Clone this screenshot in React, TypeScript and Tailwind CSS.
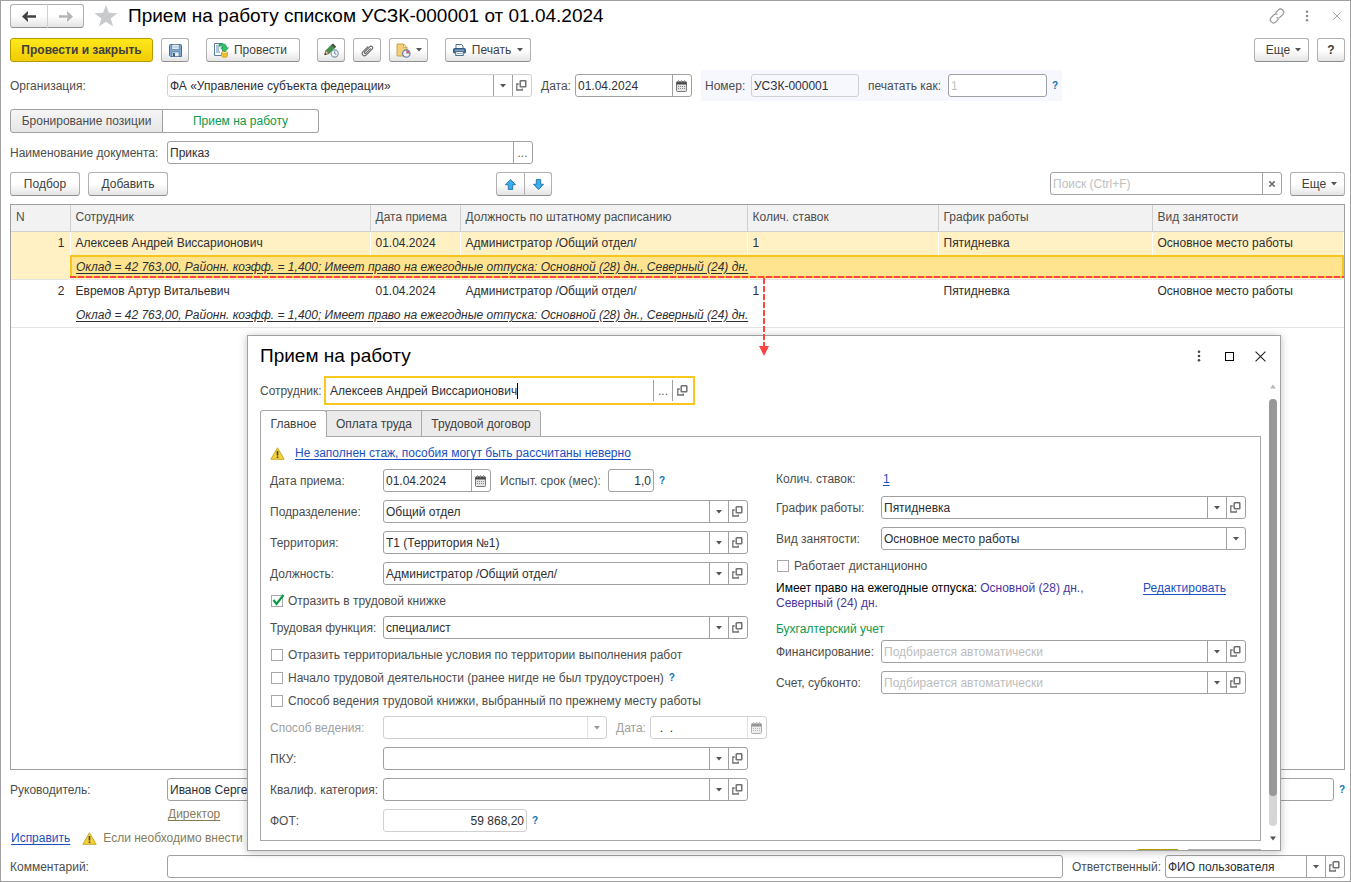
import type {ReactNode} from "react";
import clsx from "clsx";

const HINT = "text-[10px] leading-3 font-bold text-[#0f74b8]";

const columns = [
  {title: "N", width: "w-[59px]"},
  {title: "Сотрудник", width: "w-[300px]"},
  {title: "Дата приема", width: "w-[90px]"},
  {title: "Должность по штатному расписанию", width: "w-[287px]"},
  {title: "Колич. ставок", width: "w-[191px]"},
  {title: "График работы", width: "w-[214px]"},
  {title: "Вид занятости", width: "w-auto"},
];

const employees = [
  {
    name: "Алексеев Андрей Виссарионович",
    cells: ["01.04.2024", "Администратор /Общий отдел/", "1", "Пятидневка", "Основное место работы"],
    selected: true,
  },
  {
    name: "Евремов Артур Витальевич",
    cells: ["01.04.2024", "Администратор /Общий отдел/", "1", "Пятидневка", "Основное место работы"],
    selected: false,
  },
];

const terms =
  "Оклад = 42 763,00, Районн. коэфф. = 1,400; Имеет право на ежегодные отпуска: Основной (28) дн., Северный (24) дн.";

/* Icons */

function Caret() {
  return (
    <svg width="6" height="4" viewBox="0 0 6 4" aria-hidden="true">
      <path d="M0 0h6L3 3.6z" fill="#555" />
    </svg>
  );
}

function OpenIcon() {
  return (
    <svg width="11" height="11" viewBox="0 0 11 11" fill="none" stroke="#707070" aria-hidden="true">
      <rect x="4.2" y="0.8" width="5.6" height="6" rx="0.5" strokeWidth="1.5" />
      <path d="M2.800 4H0.800v6h5.500V8.500" strokeWidth="1.300" />
    </svg>
  );
}

function CalendarIcon() {
  return (
    <svg width="11" height="12" viewBox="0 0 11 12" aria-hidden="true">
      <rect x="0.5" y="2" width="10" height="9.500" rx="1" fill="#e4e4e4" stroke="#777" />
      <path d="M0.500 1.500h10v3h-10z" fill="#4a4a4a" />
      <path d="M2.500 0v2.500M5.500 0v2.500M8.500 0v2.500" stroke="#999" />
      <path d="M2 6.500h7M2 8.500h7" stroke="#888" strokeDasharray="1 1" />
    </svg>
  );
}

function Arrow({left, color}: {left?: boolean; color: string}) {
  return (
    <svg width="14" height="11" viewBox="0 0 14 11" className={clsx(!left && "rotate-180")} aria-hidden="true">
      <path d="M6 0v4.300h8v2.400H6V11L0 5.500z" fill={color} />
      <path d="M7 0v3.900L5.200 4.500z M7 11V7.100L5.200 6.500z" fill="#fff" />
    </svg>
  );
}

function StarIcon() {
  return (
    <svg width="24" height="22" viewBox="0 0 24 22" aria-hidden="true">
      <path d="M12 0l2.9 7.8 8.6.4-6.8 5.2 2.4 8.2-7.1-4.8-7.1 4.8 2.4-8.2L.5 8.2l8.6-.4z" fill="#c9cacc" />
    </svg>
  );
}

function SaveIcon() {
  return (
    <svg width="13" height="13" viewBox="0 0 13 13" aria-hidden="true">
      <path d="M0.5 1.5a1 1 0 0 1 1-1h10a1 1 0 0 1 1 1v11h-11l-1-1z" fill="#7fa6cc" stroke="#41719e" />
      <rect x="3" y="0.5" width="7" height="5" fill="#fff" stroke="#41719e" strokeWidth="0.6" />
      <path d="M4 2.2h5M4 3.8h5" stroke="#8aa9c6" strokeWidth="0.7" />
      <rect x="3" y="8" width="7" height="4.5" fill="#e9eff5" stroke="#41719e" strokeWidth="0.6" />
      <rect x="4" y="9" width="2" height="3.5" fill="#35618c" />
    </svg>
  );
}

function PostIcon() {
  return (
    <svg width="15" height="15" viewBox="0 0 15 15" aria-hidden="true">
      <path d="M0.5 0.5h8v12h-8z" fill="#fff" stroke="#5c7c9c" />
      <path d="M2 3h4M2 5h3M2 7h3M2 9h4" stroke="#5c87b0" />
      <path d="M7.5 9.5v3.3c0 2 6 2 6 0V9.5z" fill="#f1c232" stroke="#c79a18" strokeWidth="0.8" />
      <ellipse cx="10.5" cy="9.5" rx="3" ry="1.2" fill="#fbe08a" stroke="#c79a18" strokeWidth="0.6" />
      <path
        d="M5 0.8h3.500c2.800 0 4 1.200 4 4h2L10.500 9 6.500 4.800h2.300c0-1.300-.7-1.700-2-1.700H5z"
        fill="#2fc26b"
        stroke="#168a43"
        strokeWidth="0.6"
      />
    </svg>
  );
}

function PencilClockIcon() {
  return (
    <svg width="15" height="15" viewBox="0 0 15 15" aria-hidden="true">
      <path d="M0.8 11.5L2 7.5 8.5 1l3 3L5 10.5z" fill="#3f9148" stroke="#2c6d34" strokeWidth="0.7" />
      <path d="M7.5 2l1.6-1.5 2.9 3L10.500 5z" fill="#4c4c4c" />
      <path d="M0.8 11.5L2 7.5l3 3z" fill="#efc99a" stroke="#5d4a33" strokeWidth="0.5" />
      <path d="M0.6 12l.5-2 1.4 1.4z" fill="#222" />
      <circle cx="10.7" cy="10.5" r="3.6" fill="#eef3f8" stroke="#8298ae" strokeWidth="1.1" />
      <path d="M10.7 8.3v2.3l1.6 1" stroke="#54708c" strokeWidth="0.9" fill="none" />
    </svg>
  );
}

function ClipIcon() {
  return (
    <svg width="13" height="13" viewBox="0 0 13 13" fill="none" stroke="#666" strokeWidth="1.1" aria-hidden="true">
      <path d="M9.8 4.3L5 9.2c-.9.9-2.2-.3-1.3-1.3l5-5.1c1.7-1.7 4.1.6 2.4 2.4l-5.7 5.7c-2.500 2.400-5.800-.8-3.400-3.300L7.200 2.300" />
    </svg>
  );
}

function DocClockIcon() {
  return (
    <svg width="15" height="15" viewBox="0 0 15 15" aria-hidden="true">
      <path d="M1 1h6.5L11 4.5V13H1z" fill="#f3cf78" stroke="#c39a3c" strokeWidth="0.9" />
      <path d="M7.5 1v3.500H11z" fill="#fff3cf" stroke="#c39a3c" strokeWidth="0.7" />
      <circle cx="10.3" cy="10.5" r="3.7" fill="#eef3fa" stroke="#5f7fae" strokeWidth="1.2" />
      <path d="M10.3 10.5V7.2a3.3 3.3 0 0 1 3.3 3.3z" fill="#c5607a" />
    </svg>
  );
}

function PrinterIcon() {
  return (
    <svg width="13" height="12" viewBox="0 0 13 12" aria-hidden="true">
      <path d="M3 0.5h5.500L10 2v3H3z" fill="#fff" stroke="#4b6f93" />
      <rect x="0.5" y="4.5" width="12" height="4.5" rx="1" fill="#3f6a94" stroke="#31587f" />
      <path d="M2 6.2h9" stroke="#b7cadb" strokeWidth="0.8" />
      <rect x="2.8" y="7.5" width="7.4" height="4" fill="#fff" stroke="#4b6f93" />
      <path d="M4 9.5h5" stroke="#8faac4" />
    </svg>
  );
}

function MoveIcon({down}: {down?: boolean}) {
  return (
    <svg width="11" height="11" viewBox="0 0 10 10" className={clsx(down && "rotate-180")} aria-hidden="true">
      <path d="M5 0.5L9.600 5.200H7v4.300H3V5.200H0.400z" fill="#39aee8" stroke="#1c6fae" strokeWidth="0.8" strokeLinejoin="round" />
    </svg>
  );
}

function WarningIcon() {
  return (
    <svg width="15" height="13" viewBox="0 0 15 13" className="shrink-0" aria-hidden="true">
      <path d="M7.5 0.8L14.2 12.3H0.8z" fill="#f0d23c" stroke="#c9a92a" strokeLinejoin="round" />
      <path d="M7.5 4v4.5M7.5 9.5v1.5" stroke="#4a4320" strokeWidth="1.6" />
    </svg>
  );
}

function LinkIcon() {
  return (
    <svg width="16" height="16" viewBox="0 0 16 16" fill="none" stroke="#8f8f8f" strokeWidth="1.1" aria-hidden="true">
      <path d="M6.500 4.800l2.900-2.900c2.700-2.600 7.200 1.500 4.500 4.400l-3 3c-1 .9-2.300 1-3.400.3" />
      <path d="M9.500 11.200l-2.900 2.900c-2.700 2.600-7.200-1.500-4.500-4.400l3-3c1-.9 2.300-1 3.400-.3" />
    </svg>
  );
}

function DotsIcon({color}: {color: string}) {
  return (
    <svg width="4" height="12" viewBox="0 0 4 12" fill={color} aria-hidden="true">
      <circle cx="2" cy="1.7" r="1.3" />
      <circle cx="2" cy="6" r="1.3" />
      <circle cx="2" cy="10.3" r="1.3" />
    </svg>
  );
}

function CrossIcon({size, color, width = 1}: {size: number; color: string; width?: number}) {
  return (
    <svg width={size} height={size} viewBox="0 0 10 10" stroke={color} strokeWidth={width} aria-hidden="true">
      <path d="M0.5 0.5l9 9M9.5 0.5l-9 9" />
    </svg>
  );
}

/* Controls */

function Button({className, label, children}: {className?: string; label?: string; children: ReactNode}) {
  return (
    <button
      type="button"
      aria-label={label}
      className={clsx(
        "flex h-6 shrink-0 items-center justify-center rounded-[3px] border border-[#b0b0b0] border-b-[#8f8f8f] bg-linear-to-b from-white from-50% to-[#e4e4e4] text-[#404040]",
        className
      )}>
      {children}
    </button>
  );
}

type FieldProps = {
  id: string;
  value?: string;
  placeholder?: string;
  className?: string;
  select?: boolean;
  open?: boolean;
  calendar?: boolean;
  more?: boolean;
  light?: boolean;
  disabled?: boolean;
  right?: boolean;
};

function Field({id, value, placeholder, className, select, open, calendar, more, light, disabled, right}: FieldProps) {
  const divider = disabled ? "border-[#d0d0d0]" : "border-[#a0a0a0]";
  const side = clsx(
    "flex h-full w-[19px] shrink-0 items-center justify-center border-l pr-px",
    divider,
    disabled && "opacity-60"
  );

  return (
    <div
      className={clsx(
        "flex h-[23px] min-w-0 rounded-[3px] border",
        light || disabled ? "border-[#d0d0d0]" : "border-[#a0a0a0]",
        className
      )}>
      {select ? (
        <div className="relative h-full min-w-0 flex-1">
          <select
            id={id}
            disabled={disabled}
            className={clsx(
              "block h-full w-full appearance-none pr-5 pl-[2px] outline-none",
              placeholder ? "text-[#bdbdbd]" : "text-[#2e2e33]"
            )}>
            <option>{value ?? placeholder}</option>
          </select>
          <span className={clsx(side, "pointer-events-none absolute top-0 right-0")}>
            <Caret />
          </span>
        </div>
      ) : (
        <input
          id={id}
          type="text"
          defaultValue={value}
          placeholder={placeholder}
          disabled={disabled}
          className={clsx(
            "min-w-0 flex-1 px-[2px] text-[#2e2e33] outline-none placeholder:text-[#c0c0c0]",
            right && "text-right"
          )}
        />
      )}
      {more && (
        <button type="button" aria-label="Выбрать" className={clsx(side, "text-[#666]")}>
          ...
        </button>
      )}
      {calendar && (
        <button type="button" aria-label="Календарь" disabled={disabled} className={side}>
          <CalendarIcon />
        </button>
      )}
      {open && (
        <button type="button" aria-label="Открыть" className={side}>
          <OpenIcon />
        </button>
      )}
    </div>
  );
}

type RowProps = {
  label: string;
  id: string;
  wide?: boolean;
  muted?: boolean;
  children: ReactNode;
};

function Row({label, id, wide, muted, children}: RowProps) {
  return (
    <div className="flex items-center">
      <label
        htmlFor={id}
        className={clsx("shrink-0 whitespace-nowrap", wide ? "w-[113px]" : "w-[105px]", muted && "text-[#a0a0a0]")}>
        {label}
      </label>
      {children}
    </div>
  );
}

function Check({id, label, checked, children}: {id: string; label: string; checked?: boolean; children?: ReactNode}) {
  return (
    <div className="flex h-[15px] items-center pl-px">
      <span className="relative flex">
        <input
          id={id}
          type="checkbox"
          defaultChecked={checked}
          className="peer size-3 appearance-none border border-[#a8a8a8] bg-white"
        />
        <svg
          width="14"
          height="13"
          viewBox="0 0 14 13"
          className="pointer-events-none absolute bottom-0 left-0 hidden peer-checked:block"
          aria-hidden="true">
          <path d="M2.500 6l3 4L12.500 1" fill="none" stroke="#0b9a4b" strokeWidth="2.200" />
        </svg>
      </span>
      <label htmlFor={id} className="pl-[5px] whitespace-nowrap">
        {label}
      </label>
      {children}
    </div>
  );
}

function EmployeeTable() {
  return (
    <div className="relative mt-2 flex-1 border border-[#a0a0a0]">
      <table className="w-full table-fixed border-collapse">
        <thead>
          <tr className="h-[26px] bg-[#f2f2f2] text-left text-[#4d4d4d]">
            {columns.map((col) => (
              <th
                key={col.title}
                className={clsx(
                  "border-r border-b border-[#d0d0d0] px-[5px] pb-[2px] font-normal whitespace-nowrap last:border-r-0",
                  col.width
                )}>
                {col.title}
              </th>
            ))}
          </tr>
        </thead>
        {employees.map((employee, i) => (
          <tbody
            key={employee.name}
            className={clsx("border-b border-[#e4e4e4] text-[#2e2e33]", employee.selected && "bg-[#fff1c4]")}>
            <tr className="h-6">
              <td rowSpan={2} className="px-[5px] pt-1 text-right align-top leading-[14px]">
                {i + 1}
              </td>
              <td className="border-x border-white px-[5px] whitespace-nowrap">{employee.name}</td>
              {employee.cells.map((cell, n) => (
                <td key={n} className="border-x border-white px-[5px] whitespace-nowrap">
                  {cell}
                </td>
              ))}
            </tr>
            <tr className="h-6">
              <td colSpan={6} className="p-0">
                <div
                  className={clsx(
                    "flex h-[23px] items-center border-2 px-1 whitespace-nowrap italic underline underline-offset-2",
                    employee.selected ? "border-[#f9c41c] bg-[#ffe48f]" : "border-transparent"
                  )}>
                  {terms}
                </div>
              </td>
            </tr>
          </tbody>
        ))}
      </table>

      {/* Callout from the selected row to the dialog */}
      <svg className="absolute top-[71px] left-[59px] z-20 h-[3px] w-[calc(100%-59px)]" aria-hidden="true">
        <line x1="0" y1="1" x2="100%" y2="1" stroke="#f44" strokeWidth="2" strokeDasharray="6 2" />
      </svg>
      <svg width="10" height="78" className="absolute top-[73px] left-[748px] z-20" aria-hidden="true">
        <path d="M5 0v70" stroke="#f44" strokeWidth="2" strokeDasharray="6 2" />
        <path d="M0 68h10L5 78z" fill="#f44" />
      </svg>
    </div>
  );
}

function HireDialog() {
  return (
    <section
      aria-label="Прием на работу"
      className="absolute top-[334px] right-[69px] left-[246px] z-10 border border-[#a0a0a0] bg-white shadow-[0_1px_8px_rgba(0,0,0,0.25)]">
      <div className="flex h-10 items-center pr-[14px] pl-3">
        <h2 className="flex-1 text-[19px] text-black">Прием на работу</h2>
        <button type="button" aria-label="Меню" className="flex w-[31px] justify-center">
          <DotsIcon color="#444" />
        </button>
        <button type="button" aria-label="Развернуть" className="flex w-[31px] justify-center">
          <span className="size-[9px] border border-black" />
        </button>
        <button type="button" aria-label="Закрыть" className="ml-[10px] flex w-[11px] justify-center">
          <CrossIcon size={11} color="#222" />
        </button>
      </div>

      <div className="flex">
        <div className="min-w-0 flex-1 pl-3">
          <div className="flex items-center">
            <label htmlFor="employee" className="w-16 whitespace-nowrap">
              Сотрудник:
            </label>
            <div className="flex h-[29px] w-[371px] items-center border-2 border-[#f9c81e] py-[2px] pl-1">
              <input
                id="employee"
                type="text"
                defaultValue="Алексеев Андрей Виссарионович"
                className="field-sizing-content text-[#2e2e33] outline-none"
              />
              <span className="h-4 w-px bg-black" />
              <button
                type="button"
                aria-label="Выбрать"
                className="ml-auto flex h-full w-[19px] items-center justify-center border-l border-[#a0a0a0] text-[#666]">
                ...
              </button>
              <button
                type="button"
                aria-label="Открыть"
                className="flex h-full w-[21px] items-center justify-center border-l border-[#a0a0a0] pr-[2px]">
                <OpenIcon />
              </button>
            </div>
          </div>

          <div role="tablist" className="mt-[5px] -mb-px flex h-[27px] text-[#404040]">
            <button
              type="button"
              role="tab"
              aria-selected="true"
              className="relative w-[67px] rounded-t-[3px] border border-b-0 border-[#a8a8a8] bg-white">
              Главное
            </button>
            <button type="button" role="tab" aria-selected="false" className="-ml-px w-24 border border-[#a8a8a8] bg-[#ebebeb]">
              Оплата труда
            </button>
            <button
              type="button"
              role="tab"
              aria-selected="false"
              className="-ml-px w-[120px] rounded-tr-[3px] border border-[#a8a8a8] bg-[#ebebeb]">
              Трудовой договор
            </button>
          </div>

          <div className="border border-[#a8a8a8] px-[9px] py-2">
            <div className="flex h-4 items-center gap-[10px]">
              <WarningIcon />
              <a href="#" className="text-[#1a4fc0] underline underline-offset-2">
                Не заполнен стаж, пособия могут быть рассчитаны неверно
              </a>
            </div>

            <div className="mt-2 flex">
              <div className="flex w-[506px] shrink-0 flex-col gap-2">
                <Row label="Дата приема:" id="hireDate" wide>
                  <Field id="hireDate" value="01.04.2024" calendar className="w-[108px]" />
                  <label htmlFor="trial" className="w-[108px] pl-[9px] whitespace-nowrap">
                    Испыт. срок (мес):
                  </label>
                  <Field id="trial" value="1,0" right className="ml-[9px] w-[46px]" />
                  <span className={clsx(HINT, "ml-[5px]")}>?</span>
                </Row>
                <Row label="Подразделение:" id="department" wide>
                  <Field id="department" value="Общий отдел" select open className="w-[365px]" />
                </Row>
                <Row label="Территория:" id="territory" wide>
                  <Field id="territory" value="Т1 (Территория №1)" select open className="w-[365px]" />
                </Row>
                <Row label="Должность:" id="position" wide>
                  <Field id="position" value="Администратор /Общий отдел/" select open className="w-[365px]" />
                </Row>
                <Check id="workbook" label="Отразить в трудовой книжке" checked />
                <Row label="Трудовая функция:" id="duty" wide>
                  <Field id="duty" value="специалист" select open className="w-[365px]" />
                </Row>
                <Check id="conditions" label="Отразить территориальные условия по территории выполнения работ" />
                <Check id="firstJob" label="Начало трудовой деятельности (ранее нигде не был трудоустроен)">
                  <span className={clsx(HINT, "ml-[5px]")}>?</span>
                </Check>
                <Check id="method" label="Способ ведения трудовой книжки, выбранный по прежнему месту работы" />
                <Row label="Способ ведения:" id="keeping" wide muted>
                  <Field id="keeping" select disabled className="w-[224px]" />
                  <label htmlFor="keepingDate" className="w-[43px] pl-[9px] text-[#a0a0a0]">
                    Дата:
                  </label>
                  <Field id="keepingDate" value="  .  ." calendar disabled className="w-[117px]" />
                </Row>
                <Row label="ПКУ:" id="pku" wide>
                  <Field id="pku" select open className="w-[365px]" />
                </Row>
                <Row label="Квалиф. категория:" id="category" wide>
                  <Field id="category" select open className="w-[365px]" />
                </Row>
                <Row label="ФОТ:" id="fund" wide>
                  <Field id="fund" value="59 868,20" right light className="w-[144px]" />
                  <span className={clsx(HINT, "ml-[5px]")}>?</span>
                </Row>
              </div>

              <div className="flex w-[470px] flex-col gap-2">
                <div className="flex h-[19px] items-center">
                  <span className="w-[107px]">Колич. ставок:</span>
                  <a href="#" className="text-[#1a4fc0] underline underline-offset-2">
                    1
                  </a>
                </div>
                <Row label="График работы:" id="schedule">
                  <Field id="schedule" value="Пятидневка" select open className="flex-1" />
                </Row>
                <Row label="Вид занятости:" id="kind">
                  <Field id="kind" value="Основное место работы" select className="flex-1" />
                </Row>
                <Check id="remote" label="Работает дистанционно" />
                <div className="flex justify-between pr-5 leading-[15px]">
                  <div className="text-[#4a35a0]">
                    <div className="flex gap-[3px] whitespace-nowrap">
                      <span className="text-black">Имеет право на ежегодные отпуска:</span>
                      <span>Основной (28) дн.,</span>
                    </div>
                    <div>Северный (24) дн.</div>
                  </div>
                  <a href="#" className="text-[#1a4fc0] underline underline-offset-2">
                    Редактировать
                  </a>
                </div>
                <div>
                  <h3 className="h-[21px] leading-[21px] text-[#0b9a4b]">Бухгалтерский учет</h3>
                  <Row label="Финансирование:" id="financing">
                    <Field id="financing" placeholder="Подбирается автоматически" select open className="flex-1" />
                  </Row>
                </div>
                <Row label="Счет, субконто:" id="account">
                  <Field id="account" placeholder="Подбирается автоматически" select open className="flex-1" />
                </Row>
              </div>
            </div>
          </div>

          {/* Top edge of the buttons below the fold */}
          <div className="mt-2 flex h-px justify-end gap-[10px]">
            <div className="w-10 bg-[#b59a00]" />
            <div className="w-[73px] bg-[#b0b0b0]" />
          </div>
        </div>

        {/* Scrollbar */}
        <div className="flex w-[19px] flex-col items-center pt-2 pb-[9px] pl-[5px]">
          <svg width="6" height="5" viewBox="0 0 6 5" aria-hidden="true">
            <path d="M3 0.5L6 4.5H0z" fill="#b8b8b8" />
          </svg>
          <div className="my-[10px] w-2 flex-1 rounded-full bg-[#d6d6d6]">
            <div className="h-[93%] rounded-full bg-[#989898]" />
          </div>
          <svg width="6" height="5" viewBox="0 0 6 5" aria-hidden="true">
            <path d="M0 0.5h6L3 4.5z" fill="#555" />
          </svg>
        </div>
      </div>
    </section>
  );
}

export default function App() {
  return (
    <main className="relative flex min-h-screen flex-col border border-[#a0a0a0] bg-white pt-[3px] pr-[5px] pb-[3px] pl-[9px] font-['Liberation_Sans',Arial,sans-serif] text-[12px] leading-4 text-[#4d4d4d]">
      <header className="flex h-6 items-center">
        <div className="flex">
          <Button label="Назад" className="w-[38px] rounded-r-none border-r-[#d0d0d0]">
            <Arrow left color="#404040" />
          </Button>
          <Button label="Вперед" className="w-9 rounded-l-none border-l-0">
            <Arrow color="#b4b4b4" />
          </Button>
        </div>
        <button type="button" aria-label="Избранное" className="ml-[10px] flex">
          <StarIcon />
        </button>
        <h1 className="ml-[10px] flex-1 text-[19px] whitespace-nowrap text-black">
          Прием на работу списком УСЗК-000001 от 01.04.2024
        </h1>
        <button type="button" aria-label="Ссылка" className="flex w-[30px] justify-center">
          <LinkIcon />
        </button>
        <button type="button" aria-label="Меню" className="flex w-[30px] justify-center">
          <DotsIcon color="#8f8f8f" />
        </button>
        <button type="button" aria-label="Закрыть" className="mr-1 ml-[11px] flex w-2 justify-center">
          <CrossIcon size={8} color="#8f8f8f" />
        </button>
      </header>

      <div className="mt-[10px] flex gap-2">
        <button
          type="button"
          className="h-6 w-[143px] rounded-[3px] border border-[#b59a00] bg-linear-to-b from-[#ffe81a] to-[#f0cc00] font-bold whitespace-nowrap text-[#404040]">
          Провести и закрыть
        </button>
        <Button label="Записать" className="w-7">
          <SaveIcon />
        </Button>
        <Button className="ml-[9px] w-[94px] gap-[5px] pr-[5px]">
          <PostIcon />
          Провести
        </Button>
        <Button label="Изменить" className="ml-[9px] w-7">
          <PencilClockIcon />
        </Button>
        <Button label="Файлы" className="w-7">
          <ClipIcon />
        </Button>
        <Button label="Создать на основании" className="w-[39px] gap-[5px]">
          <DocClockIcon />
          <Caret />
        </Button>
        <Button className="ml-[9px] w-[86px] gap-[6px]">
          <PrinterIcon />
          Печать
          <Caret />
        </Button>
        <Button className="ml-auto w-[55px] gap-[5px] pl-1">
          Еще
          <Caret />
        </Button>
        <Button className="w-7 font-bold">?</Button>
      </div>

      <div className="mt-3 flex h-[23px] items-center">
        <label htmlFor="org" className="w-[157px]">
          Организация:
        </label>
        <Field id="org" value="ФА «Управление субъекта федерации»" select open light className="w-[365px]" />
        <label htmlFor="date" className="w-[43px] pl-[9px]">
          Дата:
        </label>
        <Field id="date" value="01.04.2024" calendar className="w-[117px]" />
        <div className="ml-[9px] flex h-[31px] items-center bg-[#f7f7fe] px-1">
          <label htmlFor="number" className="w-[46px]">
            Номер:
          </label>
          <Field id="number" value="УСЗК-000001" light className="w-[108px]" />
          <label htmlFor="printAs" className="w-[89px] pl-[9px] whitespace-nowrap">
            печатать как:
          </label>
          <Field id="printAs" placeholder="1" className="w-[99px] bg-white" />
          <span className={clsx(HINT, "ml-[5px]")}>?</span>
        </div>
      </div>

      <div className="mt-3 flex">
        <button
          type="button"
          className="h-6 w-[153px] rounded-l-[3px] border border-[#a0a0a0] bg-linear-to-b from-[#f5f5f5] to-[#e6e6e6] whitespace-nowrap">
          Бронирование позиции
        </button>
        <button type="button" className="h-6 w-[156px] rounded-r-[3px] border border-l-0 border-[#a0a0a0] text-[#0b9a4b]">
          Прием на работу
        </button>
      </div>

      <div className="mt-2 flex items-center">
        <label htmlFor="docName" className="w-[157px] whitespace-nowrap">
          Наименование документа:
        </label>
        <Field id="docName" value="Приказ" more className="w-[366px]" />
      </div>

      <div className="mt-2 flex gap-2">
        <Button className="w-[70px]">Подбор</Button>
        <Button className="w-20">Добавить</Button>
        <div className="ml-[320px] flex">
          <Button label="Вверх" className="w-[29px] rounded-r-none">
            <MoveIcon />
          </Button>
          <Button label="Вниз" className="w-[27px] rounded-l-none border-l-0">
            <MoveIcon down />
          </Button>
        </div>
        <div className="ml-auto flex h-[23px] w-[232px] rounded-[3px] border border-[#a0a0a0]">
          <input
            type="text"
            aria-label="Поиск"
            placeholder="Поиск (Ctrl+F)"
            className="min-w-0 flex-1 px-[2px] outline-none placeholder:text-[#c0c0c0]"
          />
          <button
            type="button"
            aria-label="Очистить"
            className="flex w-[19px] items-center justify-center border-l border-[#a0a0a0] pr-px">
            <CrossIcon size={6} color="#777" width={3} />
          </button>
        </div>
        <Button className="w-[55px] gap-[5px] pl-1">
          Еще
          <Caret />
        </Button>
      </div>

      <EmployeeTable />

      <div className="mt-2 flex items-center">
        <label htmlFor="head" className="w-[157px]">
          Руководитель:
        </label>
        <Field id="head" value="Иванов Сергей" className="flex-1" />
        <span className={clsx(HINT, "ml-[5px]")}>?</span>
      </div>
      <div className="mt-[5px] flex pl-[158px]">
        <a href="#" className="text-[#857c5c] underline underline-offset-2">
          Директор
        </a>
      </div>
      <div className="mt-2 flex h-4 items-center pl-px">
        <a href="#" className="text-[#1a4fc0] underline underline-offset-2">
          Исправить
        </a>
        <div className="ml-3 flex items-center gap-[6px] whitespace-nowrap text-[#857c5c]">
          <WarningIcon />
          Если необходимо внести
        </div>
      </div>
      <div className="mt-[9px] flex items-center">
        <label htmlFor="comment" className="w-[157px]">
          Комментарий:
        </label>
        <Field id="comment" className="flex-1" />
        <label htmlFor="responsible" className="w-[102px] pl-[9px] whitespace-nowrap">
          Ответственный:
        </label>
        <Field id="responsible" value="ФИО пользователя" select open className="w-[180px]" />
      </div>

      <HireDialog />
    </main>
  );
}
